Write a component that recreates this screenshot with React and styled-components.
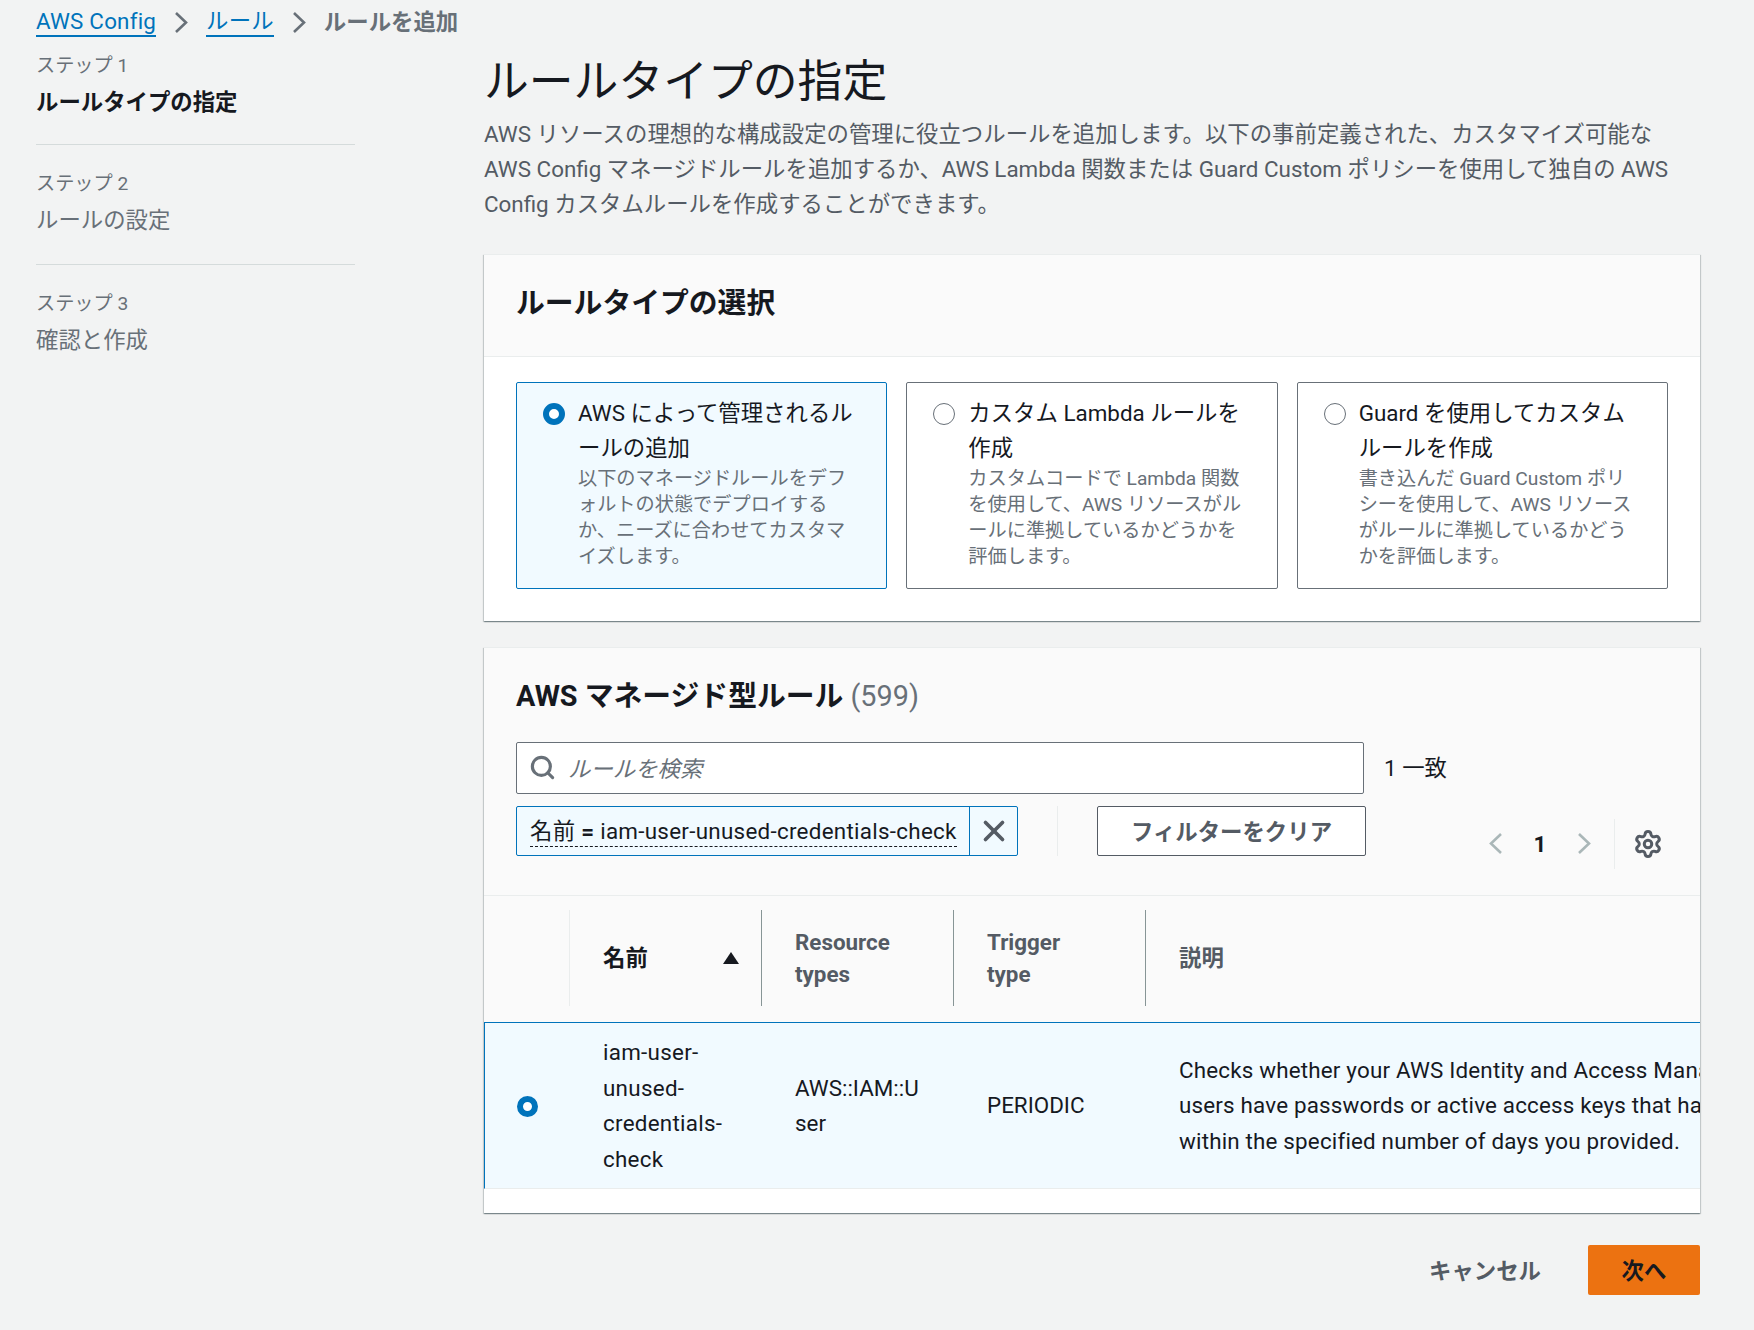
import styled, { createGlobalStyle } from 'styled-components'
import { Search, X, Settings } from 'lucide-react'

const fontStack = `Roboto, 'Noto Sans CJK JP', sans-serif`

const steps = [
	{ label: 'ステップ 1', title: 'ルールタイプの指定', active: true },
	{ label: 'ステップ 2', title: 'ルールの設定' },
	{ label: 'ステップ 3', title: '確認と作成' },
]

const ruleTypes = [
	{
		title: ['AWS によって管理されるル', 'ールの追加'],
		text: ['以下のマネージドルールをデフ', 'ォルトの状態でデプロイする', 'か、ニーズに合わせてカスタマ', 'イズします。'],
		selected: true,
	},
	{
		title: ['カスタム Lambda ルールを', '作成'],
		text: ['カスタムコードで Lambda 関数', 'を使用して、AWS リソースがル', 'ールに準拠しているかどうかを', '評価します。'],
	},
	{
		title: ['Guard を使用してカスタム', 'ルールを作成'],
		text: ['書き込んだ Guard Custom ポリ', 'シーを使用して、AWS リソース', 'がルールに準拠しているかどう', 'かを評価します。'],
	},
]

function Lines({ items }) {
	return items.map((line) => <span key={line}>{line}</span>)
}

function Chevron({ dir = 'right', color, width = 14, height = 21, weight = 2.6 }) {
	const points = dir === 'right' ? '2,1 12,10.5 2,20' : '12,1 2,10.5 12,20'
	return (
		<svg width={width} height={height} viewBox='0 0 14 21' fill='none' stroke={color} strokeWidth={weight}>
			<polyline points={points} />
		</svg>
	)
}

export default function App() {
	return (
		<Page>
			<GlobalStyle />
			<Breadcrumbs>
				<a>AWS Config</a>
				<Chevron color='#687078' />
				<a>ルール</a>
				<Chevron color='#687078' />
				<strong>ルールを追加</strong>
			</Breadcrumbs>

			<Columns>
				<StepNav>
					{steps.map((step) => (
						<Step key={step.label}>
							<small>{step.label}</small>
							<StepTitle $active={step.active}>{step.title}</StepTitle>
						</Step>
					))}
				</StepNav>

				<Main>
					<PageTitle>ルールタイプの指定</PageTitle>
					<Intro>
						<span>AWS リソースの理想的な構成設定の管理に役立つルールを追加します。以下の事前定義された、カスタマイズ可能な</span>
						<span>AWS Config マネージドルールを追加するか、AWS Lambda 関数または Guard Custom ポリシーを使用して独自の AWS</span>
						<span>Config カスタムルールを作成することができます。</span>
					</Intro>

					<Panel>
						<TypeHeader>
							<PanelTitle>ルールタイプの選択</PanelTitle>
						</TypeHeader>
						<TypeGrid>
							{ruleTypes.map((type) => (
								<TypeCard key={type.title[0]} $selected={type.selected}>
									<Radio $selected={type.selected} />
									<div>
										<TypeTitle><Lines items={type.title} /></TypeTitle>
										<TypeText><Lines items={type.text} /></TypeText>
									</div>
								</TypeCard>
							))}
						</TypeGrid>
					</Panel>

					<RulesPanel>
						<RulesHeader>
							<PanelTitle>
								AWS マネージド型ルール <Count>(599)</Count>
							</PanelTitle>
							<Toolbar>
								<Filters>
									<SearchRow>
										<SearchBox>
											<Search size={27} color='#687078' strokeWidth={2.8} />
											<em>ルールを検索</em>
										</SearchBox>
										<Matches>1 一致</Matches>
									</SearchRow>
									<TokenRow>
										<Token>
											<TokenText>
												<u>名前 <b>=</b> iam-user-unused-credentials-check</u>
											</TokenText>
											<TokenClose>
												<X size={34} color='#545b64' strokeWidth={2.6} />
											</TokenClose>
										</Token>
										<TokenDivider />
										<ClearButton>フィルターをクリア</ClearButton>
									</TokenRow>
								</Filters>
								<Pager>
									<Chevron dir='left' color='#aab7b8' />
									<PageNum>1</PageNum>
									<Chevron color='#aab7b8' />
									<PagerDivider />
									<Settings size={30} color='#545b64' strokeWidth={2.4} />
								</Pager>
							</Toolbar>
						</RulesHeader>

						<TableHead>
							<HeadCell />
							<HeadCell $dark>
								名前
								<SortArrow />
							</HeadCell>
							<HeadCell>Resource<br />types</HeadCell>
							<HeadCell>Trigger<br />type</HeadCell>
							<HeadCell $last>説明</HeadCell>
						</TableHead>

						<TableRow>
							<RowRadio>
								<Radio $selected $small />
							</RowRadio>
							<RowCell $spacing='0.28px'>iam-user-<br />unused-<br />credentials-<br />check</RowCell>
							<RowCell>AWS::IAM::U<br />ser</RowCell>
							<RowCell>PERIODIC</RowCell>
							<DescCell $spacing='0.18px'>
								Checks whether your AWS Identity and Access Management (IAM)<br />
								users have passwords or active access keys that have not been used<br />
								within the specified number of days you provided.
							</DescCell>
						</TableRow>
						<TableEnd />
					</RulesPanel>

					<Actions>
						<CancelButton>キャンセル</CancelButton>
						<NextButton>次へ</NextButton>
					</Actions>
				</Main>
			</Columns>
		</Page>
	)
}

const GlobalStyle = createGlobalStyle`
	* {
		box-sizing: border-box;
	}

	body {
		margin: 0;
		background: #f2f3f3;
		color: #16191f;
		font-family: ${fontStack};
		font-size: 22.4px;
	}
`

const Page = styled.div`
	width: 1754px;
	height: 1330px;
	padding: 6px 54px 0 36px;
	overflow: hidden;
`

const Breadcrumbs = styled.nav`
	display: flex;
	align-items: center;
	gap: 12px;
	height: 32px;
	line-height: 28px;
	white-space: nowrap;

	a {
		color: #0073bb;
		border-bottom: 2px solid #0073bb;
		letter-spacing: 0.2px;
	}

	svg {
		margin: 0 6px;
	}

	strong {
		color: #687078;
		font-weight: 700;
	}
`

const Columns = styled.div`
	display: grid;
	grid-template-columns: 319px 1216px;
	column-gap: 129px;
`

const StepNav = styled.ol`
	list-style: none;
	margin: 0;
	padding: 8px 0 0;
`

const Step = styled.li`
	height: 120px;
	padding-top: 25px;
	border-bottom: 1px solid #d5dbdb;

	&:first-child {
		height: 99px;
		padding-top: 6px;
	}

	&:last-child {
		border-bottom: none;
	}

	small {
		display: block;
		color: #687078;
		font-size: 19.2px;
		line-height: 28px;
	}
`

const StepTitle = styled.div`
	margin-top: 7px;
	line-height: 30px;
	color: ${(p) => (p.$active ? '#16191f' : '#687078')};
	font-weight: ${(p) => (p.$active ? 700 : 400)};
`

const Main = styled.main`
	display: flex;
	flex-direction: column;
`

const PageTitle = styled.h1`
	margin: 16px 0 0;
	font-size: 44.8px;
	line-height: 56px;
	font-weight: 400;
`

const Intro = styled.p`
	margin: 7px 0 0;
	color: #545b64;
	line-height: 35.2px;
	white-space: nowrap;

	span {
		display: block;
	}
`

const Panel = styled.section`
	margin-top: 31px;
	background: #fff;
	border-top: 1px solid #eaeded;
	box-shadow: 0 1px 1px 0 rgba(0, 28, 36, 0.3), 1px 1px 1px 0 rgba(0, 28, 36, 0.15), -1px 1px 1px 0 rgba(0, 28, 36, 0.15);
`

const TypeHeader = styled.header`
	height: 102px;
	padding: 28px 32px 0;
	background: #fafafa;
	border-bottom: 1px solid #eaeded;
`

const PanelTitle = styled.h2`
	margin: 0;
	font-size: 28.8px;
	line-height: 40px;
	font-weight: 700;
`

const Count = styled.span`
	color: #687078;
	font-weight: 400;
`

const TypeGrid = styled.div`
	display: grid;
	grid-template-columns: repeat(3, 1fr);
	column-gap: 19px;
	padding: 25px 32px 32px;
`

const TypeCard = styled.div`
	display: flex;
	gap: 13px;
	height: 207px;
	padding: 13px 26px;
	white-space: nowrap;
	border: 1px solid ${(p) => (p.$selected ? '#0073bb' : '#687078')};
	border-radius: 2px;
	background: ${(p) => (p.$selected ? '#f1faff' : '#fff')};
`

const Radio = styled.span`
	flex: none;
	width: ${(p) => (p.$small ? 21 : 22)}px;
	height: ${(p) => (p.$small ? 21 : 22)}px;
	margin-top: ${(p) => (p.$small ? 0 : 7)}px;
	border-radius: 50%;
	background: #fff;
	border: ${(p) => (p.$selected ? '6.5px solid #0073bb' : '1.5px solid #687078')};
`

const TypeTitle = styled.div`
	line-height: 35.2px;

	span {
		display: block;
	}
`

const TypeText = styled.div`
	color: #687078;
	font-size: 19.2px;
	line-height: 26px;

	span {
		display: block;
	}
`

const RulesPanel = styled(Panel)`
	margin-top: 26px;
	overflow: hidden;
`

const RulesHeader = styled.header`
	height: 248px;
	padding: 28px 32px 0;
	background: #fafafa;
	border-bottom: 1px solid #eaeded;
`

const Toolbar = styled.div`
	display: flex;
	justify-content: space-between;
	margin-top: 26px;
`

const Filters = styled.div`
	flex: none;
	width: 940px;
`

const SearchRow = styled.div`
	display: flex;
	align-items: center;
	gap: 20px;
	margin-bottom: 12px;
`

const SearchBox = styled.div`
	display: flex;
	align-items: center;
	gap: 12px;
	width: 848px;
	height: 52px;
	padding: 0 12px 1px;
	background: #fff;
	border: 1px solid #687078;
	border-radius: 2px;

	em {
		color: #687078;
	}
`

const Matches = styled.span`
	margin-top: -3px;
	white-space: nowrap;
`

const TokenRow = styled.div`
	display: flex;
	align-items: stretch;
	height: 50px;
`

const Token = styled.div`
	display: flex;
	width: 502px;
	background: #f1faff;
	border: 1px solid #0073bb;
	border-radius: 2px;
`

const TokenText = styled.div`
	flex: 1;
	padding: 0 0 0 13px;
	line-height: 49px;
	white-space: nowrap;
	letter-spacing: 0.28px;

	u {
		text-decoration: none;
		border-bottom: 1px dashed #16191f;
		padding-bottom: 2px;
	}

	b {
		font-weight: 700;
	}
`

const TokenClose = styled.div`
	display: flex;
	align-items: center;
	justify-content: center;
	width: 48px;
	border-left: 1px solid #0073bb;
`

const TokenDivider = styled.div`
	width: 1px;
	margin: 0 39px;
	background: #eaeded;
`

const ClearButton = styled.button`
	width: 269px;
	padding: 0 0 2px;
	background: #fff;
	border: 1px solid #545b64;
	border-radius: 2px;
	color: #545b64;
	font: 700 22.4px ${fontStack};
`

const Pager = styled.div`
	display: flex;
	align-items: center;
	height: 50px;
	margin: 77px 5px 0 0;
`

const PageNum = styled.span`
	width: 74px;
	text-align: center;
	font-weight: 700;
`

const PagerDivider = styled.span`
	width: 1px;
	height: 50px;
	margin: 0 18px 0 23px;
	background: #eaeded;
`

const tableColumns = '86px 192px 192px 192px 1fr'

const TableHead = styled.div`
	display: grid;
	grid-template-columns: ${tableColumns};
	height: 126px;
	padding-top: 14px;
	background: #fafafa;
`

const HeadCell = styled.div`
	display: flex;
	align-items: center;
	position: relative;
	height: 96px;
	padding-left: 33px;
	color: ${(p) => (p.$dark ? '#16191f' : '#545b64')};
	font-weight: 700;
	line-height: 32px;
	border-right: ${(p) => (p.$last ? 'none' : '1px solid #879596')};

	&:first-child {
		border-right: 1px solid #eaeded;
	}
`

const SortArrow = styled.span`
	position: absolute;
	right: 22px;
	top: 42px;
	width: 0;
	height: 0;
	border: 8px solid transparent;
	border-top: none;
	border-bottom: 12px solid #16191f;
`

const TableRow = styled.div`
	display: grid;
	grid-template-columns: ${tableColumns};
	height: 167px;
	padding-top: 2px;
	align-items: center;
	background: #f1faff;
	border-top: 1px solid #0073bb;
	border-left: 1px solid #0073bb;
	border-bottom: 1px solid #eaeded;
	line-height: 35.4px;
`

const RowRadio = styled.div`
	display: flex;
	justify-content: center;
	padding-right: 2px;
`

const RowCell = styled.div`
	padding-left: 32px;
	white-space: nowrap;
	letter-spacing: ${(p) => p.$spacing || 'normal'};
`

const DescCell = styled(RowCell)`
	width: 800px;
`

const TableEnd = styled.div`
	height: 24px;
`

const Actions = styled.div`
	display: flex;
	align-items: center;
	justify-content: flex-end;
	gap: 47px;
	margin-top: 32px;
`

const CancelButton = styled.button`
	background: none;
	border: none;
	padding: 0 0 2px;
	color: #545b64;
	font: 700 22.4px ${fontStack};
`

const NextButton = styled.button`
	width: 112px;
	height: 50px;
	padding: 0 0 2px;
	background: #ec7211;
	border: none;
	border-radius: 2px;
	color: #16191f;
	font: 700 22.4px ${fontStack};
`
